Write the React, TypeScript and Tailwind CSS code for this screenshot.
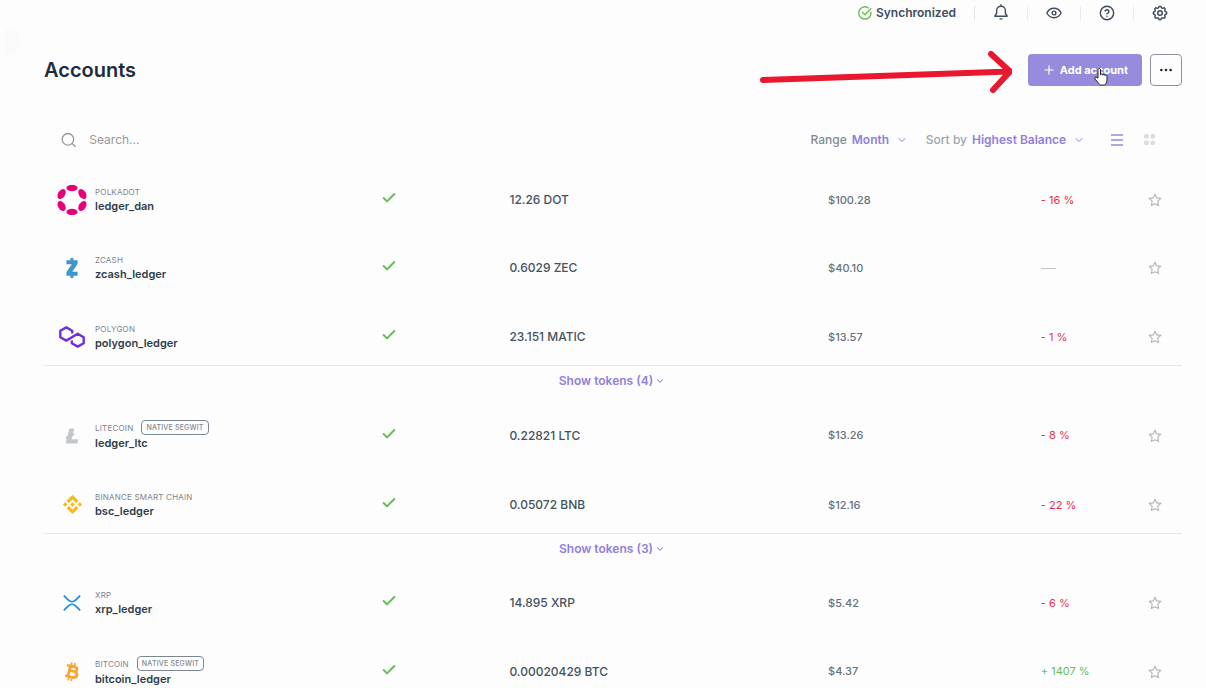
import React from 'react';
import { Check, ChevronDown, CircleHelp, MoreHorizontal, Plus, Search } from 'lucide-react';
import { TbSettings } from 'react-icons/tb';

type Account = {
  chain: string;
  name: string;
  amount: string;
  value: string;
  change: string;
  tag?: string;
  tokens?: number;
  logo: React.ReactNode;
};

const Polkadot = () => (
  <svg viewBox="-15 -15 30 30" className="h-[30px] w-[30px]" fill="#e6007a" aria-hidden="true">
    <ellipse cy="-11.9" rx="5.6" ry="3.2" />
    <ellipse cy="11.9" rx="5.6" ry="3.2" />
    <ellipse cy="-12" rx="5.5" ry="3.5" transform="rotate(60)" />
    <ellipse cy="-12" rx="5.5" ry="3.5" transform="rotate(120)" />
    <ellipse cy="-12" rx="5.5" ry="3.5" transform="rotate(240)" />
    <ellipse cy="-12" rx="5.5" ry="3.5" transform="rotate(300)" />
  </svg>
);

const Zcash = () => (
  <svg viewBox="0 0 12 20" className="h-5 w-3" fill="#3f96cd" aria-hidden="true">
    <path d="M4.4 0h3v2.3h4.2v3.4L6.2 13.8h5.4v3.9H7.4V20h-3v-2.3H.4v-3.4L5.8 6.2H.4V2.3h4z" />
  </svg>
);

const Polygon = () => (
  <svg viewBox="0 0 26 22" className="h-[22px] w-[26px]" fill="none" stroke="#6f2fe0" strokeWidth="2.4" strokeLinejoin="round" aria-hidden="true">
    <path d="M13.2 7.5V4.8L7.3 1.4 1.3 4.8v6.4l6 3.4 11.4-6.8 6 3.4v6l-6 3.4-5.9-3.4v-2.6" />
  </svg>
);

const Litecoin = () => (
  <svg viewBox="0 0 14 16" className="h-4 w-3.5" fill="#c3c6cb" aria-hidden="true">
    <path d="M4.4.5h4.9L8 5.5l1.5-.6-.6 2.7-1.6.7-.8 3h6.7l-.9 4.2H.7l1.1-4.7-1.3.5.6-2.6 1.4-.6z" />
  </svg>
);

const Binance = () => (
  <svg viewBox="0 0 126.6 126.6" className="h-[19px] w-[19px]" fill="#f7b917" stroke="#f7b917" strokeWidth="1" aria-hidden="true">
    <path d="M38.7 53.2l24.6-24.6 24.6 24.6 14.3-14.3L63.3 0 24.4 38.9zM0 63.3L14.3 49l14.3 14.3L14.3 77.6zM38.7 73.4L63.3 98l24.6-24.6 14.3 14.3-38.9 38.9-38.9-38.9zM98 63.3L112.3 49l14.3 14.3-14.3 14.3zM77.8 63.3L63.3 48.8 48.8 63.3l14.5 14.5z" />
  </svg>
);

const Xrp = () => (
  <svg viewBox="0 0 18 16" className="h-4 w-[18px]" fill="none" stroke="#1f93d6" strokeWidth="1.8" aria-hidden="true">
    <path d="M.8.6l4.6 4.5c2 2 5.2 2 7.2 0L17.2.6M.8 15.4l4.6-4.5c2-2 5.2-2 7.2 0l4.6 4.5" />
  </svg>
);

const Bitcoin = () => (
  <svg viewBox="0 0 14 19" className="h-[19px] w-3.5" fill="none" stroke="#fba42f" aria-hidden="true">
    <path strokeWidth="2.7" strokeLinejoin="round" d="M2 3.3l7.4 1.5c4 1 3.2 5-.6 4.7L4.5 8.7M8.8 9.500c5 1.2 3.6 6.5-1 5.8L0 13.7M5.2 4L3 14.3" />
    <path strokeWidth="1.8" d="M6.9.4l-.8 3.600M10 1l-.8 3.700M4 15l-.8 3.400M7 15.600l-.8 3.300" />
  </svg>
);

const accounts: Account[] = [
  { chain: 'POLKADOT', name: 'ledger_dan', amount: '12.26 DOT', value: '$100.28', change: '- 16 %', logo: <Polkadot /> },
  { chain: 'ZCASH', name: 'zcash_ledger', amount: '0.6029 ZEC', value: '$40.10', change: '', logo: <Zcash /> },
  { chain: 'POLYGON', name: 'polygon_ledger', amount: '23.151 MATIC', value: '$13.57', change: '- 1 %', tokens: 4, logo: <Polygon /> },
  { chain: 'LITECOIN', name: 'ledger_ltc', amount: '0.22821 LTC', value: '$13.26', change: '- 8 %', tag: 'NATIVE SEGWIT', logo: <Litecoin /> },
  { chain: 'BINANCE SMART CHAIN', name: 'bsc_ledger', amount: '0.05072 BNB', value: '$12.16', change: '- 22 %', tokens: 3, logo: <Binance /> },
  { chain: 'XRP', name: 'xrp_ledger', amount: '14.895 XRP', value: '$5.42', change: '- 6 %', logo: <Xrp /> },
  { chain: 'BITCOIN', name: 'bitcoin_ledger', amount: '0.00020429 BTC', value: '$4.37', change: '+ 1407 %', tag: 'NATIVE SEGWIT', logo: <Bitcoin /> },
];

const Star = () => (
  <svg viewBox="0 0 14 14" className="h-3.5 w-3.5" fill="none" stroke="#b0b4b9" strokeWidth="1.1" strokeLinejoin="round" aria-hidden="true">
    <path d="M7 1.2l1.7 3.7 4.1.5-3 2.8.8 4.2L7 10.7l-3.6 1.7.8-4.2-3-2.8 4.1-.5z" />
  </svg>
);

const BellIcon = () => (
  <svg viewBox="0 0 16 16" className="mb-0.5 h-4 w-4" fill="none" stroke="currentColor" strokeWidth="1.4" strokeLinecap="round" strokeLinejoin="round" aria-hidden="true">
    <path d="M8 .8v1.4M3.6 9.5V6.7a4.4 4.4 0 0 1 8.8 0v2.8l1.8 2.7H1.8zM7 14.9h2" />
  </svg>
);

const EyeIcon = () => (
  <svg viewBox="0 0 16 16" className="h-4 w-4" fill="none" stroke="currentColor" strokeWidth="1.4" strokeLinejoin="round" aria-hidden="true">
    <path d="M.9 8C2.5 4.8 5 3.3 8 3.3S13.5 4.8 15.1 8c-1.6 3.2-4.1 4.7-7.1 4.7S2.5 11.2.9 8z" />
    <circle cx="8" cy="8" r="1.9" />
  </svg>
);

function AccountRows({ account }: { account: Account }) {
  const gap = account.tokens ? 'pt-0.5' : 'pb-2.5';
  const height = account.tokens ? 'h-[58px]' : account.tag ? 'h-[69px]' : 'h-[68px]';
  return (
    <tbody>
      <tr className={height}>
        <th scope="row" className={`${gap} text-left font-normal`}>
          <div className="flex items-center gap-[7px] pl-3">
            <span className="flex w-8 shrink-0 justify-center">{account.logo}</span>
            <div className="min-w-0">
              <div className="flex items-center gap-2 text-[8px] leading-3 tracking-wide text-[#7d838d]">
                {account.chain}
                {account.tag && (
                  <span className="rounded border border-[#7d8792] px-1 text-[7px] leading-[13px] font-medium text-[#7d8792]">
                    {account.tag}
                  </span>
                )}
              </div>
              <div className="text-[11px] leading-4 font-semibold text-[#2f3d4c]">{account.name}</div>
            </div>
          </div>
        </th>
        <td className={gap}>
          <Check className="mb-1 h-4 w-4 text-[#66be54]" strokeWidth={3} role="img" aria-label="Synchronized" />
        </td>
        <td className={`${gap} text-xs font-medium text-[#465260]`}>{account.amount}</td>
        <td className={`${gap} text-[11px] font-medium text-[#67717c]`}>{account.value}</td>
        <td className={`${gap} text-[11px] whitespace-nowrap ${account.change.startsWith('+') ? 'text-[#66be54]' : 'text-[#ea2e49]'}`}>
          {account.change || <div className="h-px w-[15px] bg-[#c3c6ca]" />}
        </td>
        <td className={gap}>
          <button type="button" aria-label={`Star ${account.name}`} className="block">
            <Star />
          </button>
        </td>
      </tr>
      {account.tokens && (
        <tr className="h-[41px]">
          <td colSpan={6} className="border-t border-[#e6e7e8] pr-0.5 pb-2.5">
            <button type="button" className="mx-auto flex items-center gap-0.5 text-xs font-semibold text-[#8f80db]">
              Show tokens ({account.tokens})
              <ChevronDown className="h-2.5 w-2.5" strokeWidth={2.5} />
            </button>
          </td>
        </tr>
      )}
    </tbody>
  );
}

export default function App() {
  return (
    <div className="relative h-screen overflow-hidden bg-[#fdfdfd] font-['Inter',sans-serif] text-[#1d2c3d]">
      <div className="absolute top-7 left-1.5 h-7 w-3.5 rounded-r-full bg-[#f9faf9]" />

      <header className="flex h-[26px] items-center justify-end pr-[38px] text-[#3f4c5c]">
        <div className="flex items-center gap-1 pr-[18px] text-xs font-semibold">
          <svg viewBox="0 0 14 14" className="h-3.5 w-3.5" fill="none" stroke="#66be54" strokeWidth="1.4" strokeLinecap="round" strokeLinejoin="round" aria-hidden="true">
            <path d="M13 6.5A6.1 6.1 0 1 1 10.2 1.8M4.5 6.5L7 8.8l5.8-6" />
          </svg>
          Synchronized
        </div>
        <div className="flex items-center gap-[18px]">
          <span className="h-3.5 w-px bg-[#e4e5e7]" />
          <button type="button" aria-label="Notifications"><BellIcon /></button>
          <span className="h-3.5 w-px bg-[#ededee]" />
          <button type="button" aria-label="Hide balances"><EyeIcon /></button>
          <span className="h-3.5 w-px bg-[#ededee]" />
          <button type="button" aria-label="Help"><CircleHelp className="h-4 w-4" strokeWidth={2.2} /></button>
          <span className="h-3.5 w-px bg-[#ededee]" />
          <button type="button" aria-label="Settings"><TbSettings className="-m-px h-[18px] w-[18px]" /></button>
        </div>
      </header>

      <main className="pr-6 pl-11">
        <div className="flex items-center justify-between pt-7">
          <h1 className="text-xl leading-8 font-semibold">Accounts</h1>
          <div className="flex gap-2">
            <div className="relative">
              <button type="button" className="flex h-8 items-center gap-1 rounded bg-[#978bdd] px-3.5 text-[11px] font-bold text-white">
                <Plus className="h-3.5 w-3.5" strokeWidth={2} />
                Add account
              </button>
              <svg viewBox="0 0 256 44" className="pointer-events-none absolute top-[-4px] right-[130px] h-11 w-64" fill="none" stroke="#e8192f" strokeWidth="6" strokeLinecap="round" strokeLinejoin="round" aria-hidden="true">
                <path d="M7 30L254 21.5M235 4l19 17.5L237 40" />
              </svg>
              <svg viewBox="0 0 14 18" className="pointer-events-none absolute top-3.5 right-[34px] h-[18px] w-3.5" fill="white" stroke="#222" strokeLinejoin="round" aria-hidden="true">
                <path d="M4 10V2c0-2 2.5-2 2.5 0v5c0-1.5 2.3-1.4 2.3.3 0-1.3 2.2-1.2 2.2.4 0-1.2 2-1 2 .6V12c0 3.5-1.5 5.2-4.5 5.2S5 16 4 14.5L1 11c-.9-1.4.7-2.6 1.9-1.5z" />
              </svg>
            </div>
            <button type="button" aria-label="More options" className="flex h-8 w-8 items-center justify-center rounded border border-[#8d949d]">
              <MoreHorizontal className="h-4 w-4" />
            </button>
          </div>
        </div>

        <div className="flex h-[107px] items-center pr-[27px] pl-4">
          <label className="flex grow items-center gap-3">
            <Search className="h-[18px] w-[18px] text-[#949aa2]" strokeWidth={1.8} />
            <input type="search" aria-label="Search" placeholder="Search..." className="w-full bg-transparent text-xs outline-none placeholder:text-[#949aa2]" />
          </label>
          <label className="flex items-center gap-[5px] text-xs font-medium whitespace-nowrap text-[#858b94]">
            Range
            <select className="appearance-none bg-transparent font-semibold text-[#8f80db] outline-none">
              <option>Month</option>
            </select>
            <ChevronDown className="ml-px h-3 w-3 text-[#8f80db]" />
          </label>
          <label className="ml-[18px] flex items-center gap-[5px] text-xs font-medium whitespace-nowrap text-[#a0a5ac]">
            Sort by
            <select className="appearance-none bg-transparent font-semibold text-[#8f80db] outline-none">
              <option>Highest Balance</option>
            </select>
            <ChevronDown className="ml-px h-3 w-3 text-[#8f80db]" />
          </label>
          <button type="button" aria-label="List view" className="ml-[26px]">
            <svg viewBox="0 0 12 12" className="h-3 w-3" stroke="#978bdd" strokeWidth="1.7" aria-hidden="true">
              <path d="M0 1h12M0 6h12M0 11h12" />
            </svg>
          </button>
          <button type="button" aria-label="Grid view" className="ml-[21px]">
            <svg viewBox="0 0 11 11" className="h-[11px] w-[11px]" fill="#dcddde" aria-hidden="true">
              <rect width="5" height="4.5" rx="1.5" />
              <rect x="6.5" width="4.5" height="4.5" rx="1.5" />
              <rect y="6.5" width="5" height="4.5" rx="1.5" />
              <rect x="6.5" y="6.5" width="4.5" height="4.5" rx="1.5" />
            </svg>
          </button>
        </div>

        <table aria-label="Accounts" className="mt-[-22px] w-full table-fixed border-collapse">
          <colgroup>
            <col className="w-[29.6%]" />
            <col className="w-[11.3%]" />
            <col className="w-[28%]" />
            <col className="w-[18.7%]" />
            <col className="w-[9.4%]" />
            <col className="w-[3%]" />
          </colgroup>
          {accounts.map((account) => (
            <AccountRows key={account.name} account={account} />
          ))}
        </table>
      </main>
    </div>
  );
}
